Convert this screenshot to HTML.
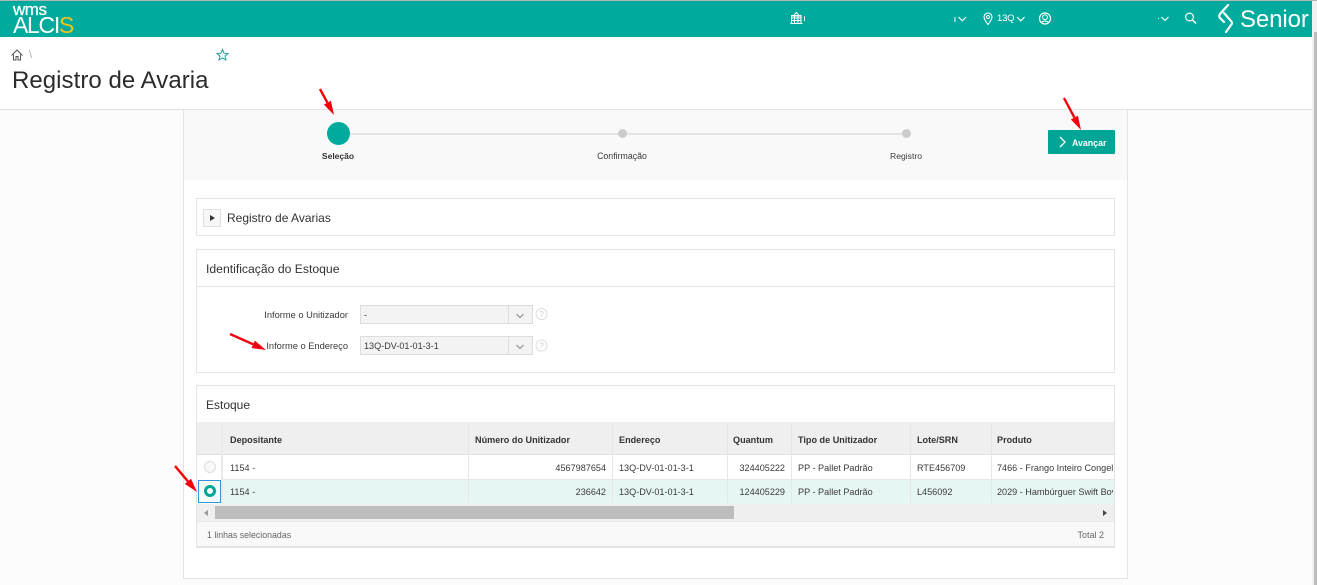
<!DOCTYPE html>
<html lang="pt"><head><meta charset="utf-8"><title>Registro de Avaria</title>
<style>
html,body{margin:0;padding:0;width:1317px;height:585px;overflow:hidden;background:#fff}
body{position:relative;font-family:"Liberation Sans",sans-serif;color:#333}
.a{position:absolute;white-space:nowrap}
.t{position:absolute;white-space:nowrap;font-size:9.1px;line-height:14px;color:#3a3a3a}
.h{font-weight:bold;color:#333;font-size:9.1px}
.r{text-align:right}
.b{position:absolute;background:#e6e6e6}
</style></head><body>
<!-- top bar -->
<div class="a" style="left:0;top:0;width:1317px;height:1px;background:#b5b5b5"></div>
<div class="a" style="left:0;top:1px;width:1312px;height:36px;background:#00ab9d"></div>
<div class="a" style="left:1312px;top:1px;width:5px;height:31px;background:#f0f0f0"></div>
<div class="a" style="left:1312px;top:32px;width:2px;height:553px;background:#f1f1f1"></div>
<div class="a" style="left:1314px;top:32px;width:3px;height:553px;background:#bdbdbd"></div>
<div class="a" style="left:13px;top:3px;font-size:17px;line-height:14px;color:#fff;letter-spacing:-.5px;-webkit-text-stroke:.3px #fff">wms</div>
<div class="a" style="left:13px;top:14px;font-size:23px;line-height:22px;color:#fff;letter-spacing:-1.3px">ALCI<span style="color:#f0c419">S</span></div>
<svg class="a" style="left:0;top:0" width="1312" height="37" fill="none" stroke="#fff">
 <!-- building -->
 <path d="M790 23.500h12.500M791.500 23v-7h9.500v7M791 15.500h10.500M794 15l2.300-2.500 2.300 2.500M791.500 18h9.500M791.500 20.500h9.500M794.500 16v7M798 16v7" stroke-width="1"/>
 <path d="M804.500 16.500v4.500M955 17v5" stroke-width="1"/>
 <path d="M958.500 17l3.800 3.800 3.800-3.800M1017 17l3.800 3.800 3.800-3.800M1161.500 17l3.500 3.500 3.500-3.500" stroke-width="1.100"/>
 <!-- pin -->
 <path d="M988 24.500c-2.500-3.200-4-5.300-4-7.500a4 4 0 0 1 8 0c0 2.200-1.500 4.300-4 7.500z" stroke-width="1.100"/>
 <circle cx="988" cy="17" r="1.500" stroke-width="1"/>
 <!-- user -->
 <circle cx="1045" cy="18.500" r="5.500" stroke-width="1.200"/>
 <circle cx="1045" cy="17.300" r="2.400" stroke-width="1"/>
 <path d="M1041.500 22.500c1-1.800 6-1.800 7 0" stroke-width="1"/>
 <path d="M1158 18.500h1" stroke-width="1"/>
 <!-- search -->
 <circle cx="1189.500" cy="17" r="3.900" stroke-width="1.200"/>
 <path d="M1192.500 20l3.500 3.500" stroke-width="1.300"/>
 <!-- senior symbol -->
 <path d="M1228 5L1220 14Q1218.500 16 1220 18L1224 22" stroke-width="2.200" stroke-linecap="round"/>
 <path d="M1224 13L1231 21Q1233 23 1231 25L1226 32" stroke-width="2.200" stroke-linecap="round"/>
</svg>
<div class="a" style="left:997px;top:12px;font-size:9.500px;line-height:14px;color:#fff;letter-spacing:-.2px">13Q</div>
<div class="a" style="left:1240px;top:5px;font-size:24px;line-height:30px;color:#fff;letter-spacing:-.1px">Senior</div>
<!-- breadcrumb -->
<svg class="a" style="left:10px;top:48px" width="16" height="14" fill="none" stroke="#555" stroke-width="1"><path d="M1.500 7.500L7 2l5.500 5.500M3.500 6.500V12h2.500V8.500h2V12h2.500V6.500"/></svg>
<div class="a" style="left:29px;top:48px;font-size:11px;line-height:14px;color:#aaa">\</div>
<svg class="a" style="left:216px;top:48px" width="14" height="14" fill="none" stroke="#1a9e95" stroke-width="1"><path d="M6.500 1.500l1.500 3.700 4 .3-3 2.600 1 3.900-3.500-2.100L3 12l1-3.900-3-2.600 4-.3z"/></svg>
<div class="a" style="left:12px;top:66px;font-size:24px;line-height:30px;color:#2c2c2c;letter-spacing:.05px">Registro de Avaria</div>
<!-- page bg -->
<div class="a" style="left:0;top:109px;width:1312px;height:476px;background:#fcfcfc;border-top:1px solid #e0e0e0;box-sizing:border-box"></div>
<!-- main card -->
<div class="a" style="left:183px;top:109px;width:945px;height:470px;background:#fff;border:1px solid #e4e4e4;box-sizing:border-box"></div>
<div class="a" style="left:184px;top:110px;width:943px;height:70px;background:#f9f9f9"></div>
<!-- stepper -->
<div class="a" style="left:338px;top:133px;width:568px;height:2px;background:#e4e4e4"></div>
<div class="a" style="left:327px;top:122px;width:23px;height:23px;border-radius:50%;background:#00ab9d"></div>
<div class="a" style="left:617.500px;top:129px;width:9px;height:9px;border-radius:50%;background:#ccc"></div>
<div class="a" style="left:901.500px;top:129px;width:9px;height:9px;border-radius:50%;background:#ccc"></div>
<div class="t" style="left:288px;width:100px;text-align:center;top:149px;font-weight:bold;color:#333;font-size:8.500px">Seleção</div>
<div class="t" style="left:572px;width:100px;text-align:center;top:149px;font-size:8.800px">Confirmação</div>
<div class="t" style="left:856px;width:100px;text-align:center;top:149px;font-size:8.600px">Registro</div>
<!-- button -->
<div class="a" style="left:1048px;top:130px;width:67px;height:24px;background:#00a596;border-radius:1px"></div>
<svg class="a" style="left:1048px;top:130px" width="24" height="24" fill="none" stroke="#fff" stroke-width="1.300"><path d="M12 7l5 5-5 5"/></svg>
<div class="a" style="left:1072px;top:136px;font-size:8.800px;line-height:14px;font-weight:bold;color:#fff">Avançar</div>
<!-- panel 1 -->
<div class="a" style="left:196px;top:198px;width:919px;height:38px;border:1px solid #e4e4e4;background:#fff;box-sizing:border-box"></div>
<div class="a" style="left:203px;top:209px;width:18px;height:18px;background:#f7f7f7;border:1px solid #e0e0e0;box-sizing:border-box"></div>
<div class="a" style="left:210px;top:215px;width:0;height:0;border-left:5px solid #333;border-top:3px solid transparent;border-bottom:3px solid transparent"></div>
<div class="a" style="left:227px;top:210px;font-size:12px;line-height:16px;color:#333">Registro de Avarias</div>
<!-- panel 2 -->
<div class="a" style="left:196px;top:249px;width:919px;height:124px;border:1px solid #e4e4e4;background:#fff;box-sizing:border-box"></div>
<div class="b" style="left:197px;top:286px;width:917px;height:1px"></div>
<div class="a" style="left:206px;top:261px;font-size:12.200px;line-height:16px;color:#333">Identificação do Estoque</div>
<div class="t r" style="left:200px;width:148px;top:308px;font-size:9.300px">Informe o Unitizador</div>
<div class="t r" style="left:200px;width:148px;top:339px;font-size:9.300px">Informe o Endereço</div>
<div class="a" style="left:360px;top:305px;width:173px;height:19px;background:#f3f3f3;border:1px solid #dcdcdc;box-sizing:border-box"></div>
<div class="a" style="left:360px;top:336px;width:173px;height:19px;background:#f3f3f3;border:1px solid #dcdcdc;box-sizing:border-box"></div>
<div class="b" style="left:508px;top:305px;width:1px;height:19px;background:#dcdcdc"></div>
<div class="b" style="left:508px;top:336px;width:1px;height:19px;background:#dcdcdc"></div>
<div class="t" style="left:364px;top:308px">-</div>
<div class="t" style="left:364px;top:339px">13Q-DV-01-01-3-1</div>
<svg class="a" style="left:505px;top:300px" width="50" height="60" fill="none">
 <path d="M11.500 14l3.500 3.500 3.500-3.500M11.500 45l3.500 3.500 3.500-3.500" stroke="#888"/>
 <circle cx="36.500" cy="14" r="5.500" stroke="#ddd"/><circle cx="36.500" cy="45.500" r="5.500" stroke="#ddd"/>
 <text x="36.500" y="17" font-size="8" fill="#ccc" text-anchor="middle" font-family="Liberation Sans">?</text>
 <text x="36.500" y="48.500" font-size="8" fill="#ccc" text-anchor="middle" font-family="Liberation Sans">?</text>
</svg>
<!-- panel 3 -->
<div class="a" style="left:196px;top:385px;width:919px;height:163px;border:1px solid #e4e4e4;border-bottom:2px solid #e4e4e4;background:#fff;box-sizing:border-box"></div>
<div class="a" style="left:206px;top:397px;font-size:12px;line-height:16px;color:#333">Estoque</div>
<div class="a" style="left:197px;top:422px;width:917px;height:32px;background:#efefef"></div>
<div class="b" style="left:197px;top:454px;width:917px;height:1px;background:#e0e0e0"></div>
<div class="a" style="left:197px;top:480px;width:917px;height:24px;background:#e6f6f4"></div>
<div class="b" style="left:197px;top:479px;width:917px;height:1px"></div>
<div class="a" style="left:197px;top:455px;width:25px;height:49px;background:#fff"></div>
<div class="a" style="left:197px;top:504px;width:917px;height:17px;background:#efefef"></div>
<div class="a" style="left:197px;top:521px;width:917px;height:25px;background:#f9f9f9;border-top:1px solid #e8e8e8;box-sizing:border-box"></div>
<div class="b" style="left:221px;top:423px;width:2px;height:80px;background:#eaeaea"></div>
<div class="b" style="left:468px;top:423px;width:1px;height:80px"></div>
<div class="b" style="left:612px;top:423px;width:1px;height:80px"></div>
<div class="b" style="left:727px;top:423px;width:1px;height:80px"></div>
<div class="b" style="left:791px;top:423px;width:1px;height:80px"></div>
<div class="b" style="left:910px;top:423px;width:1px;height:80px"></div>
<div class="b" style="left:991px;top:423px;width:1px;height:80px"></div>
<!-- headers -->
<div class="t h" style="left:230px;top:433px">Depositante</div>
<div class="t h" style="left:475px;top:433px">Número do Unitizador</div>
<div class="t h" style="left:619px;top:433px">Endereço</div>
<div class="t h" style="left:733px;top:433px">Quantum</div>
<div class="t h" style="left:798px;top:433px">Tipo de Unitizador</div>
<div class="t h" style="left:917px;top:433px">Lote/SRN</div>
<div class="t h" style="left:997px;top:433px">Produto</div>
<!-- rows -->
<div class="t" style="left:230px;top:461px">1154 -</div>
<div class="t r" style="left:480px;width:126px;top:461px">4567987654</div>
<div class="t" style="left:619px;top:461px">13Q-DV-01-01-3-1</div>
<div class="t r" style="left:730px;width:55px;top:461px">324405222</div>
<div class="t" style="left:798px;top:461px">PP - Pallet Padrão</div>
<div class="t" style="left:917px;top:461px">RTE456709</div>
<div class="t" style="left:997px;top:461px;width:116px;overflow:hidden">7466 - Frango Inteiro Congelado</div>
<div class="t" style="left:230px;top:485px">1154 -</div>
<div class="t r" style="left:480px;width:126px;top:485px">236642</div>
<div class="t" style="left:619px;top:485px">13Q-DV-01-01-3-1</div>
<div class="t r" style="left:730px;width:55px;top:485px">124405229</div>
<div class="t" style="left:798px;top:485px">PP - Pallet Padrão</div>
<div class="t" style="left:917px;top:485px">L456092</div>
<div class="t" style="left:997px;top:485px;width:116px;overflow:hidden">2029 - Hambúrguer Swift Bovino</div>
<!-- radios -->
<div class="a" style="left:204px;top:461px;width:10px;height:10px;border-radius:50%;border:1px solid #ddd;background:#f8f8f8"></div>
<div class="a" style="left:198px;top:480px;width:23px;height:23px;border:1px solid #3a94d4;box-sizing:border-box;background:#f4fbfa"></div>
<div class="a" style="left:204px;top:485px;width:6px;height:6px;border-radius:50%;border:3px solid #00a596;background:#fff"></div>
<!-- horizontal scrollbar -->
<div class="a" style="left:215px;top:506px;width:519px;height:13px;background:#bdbdbd"></div>
<div class="a" style="left:204px;top:509.500px;width:0;height:0;border-right:4px solid #999;border-top:3.500px solid transparent;border-bottom:3.500px solid transparent"></div>
<div class="a" style="left:1103px;top:509.500px;width:0;height:0;border-left:4px solid #444;border-top:3.500px solid transparent;border-bottom:3.500px solid transparent"></div>
<!-- footer -->
<div class="t" style="left:207px;top:528px;color:#666;font-size:8.800px">1 linhas selecionadas</div>
<div class="t r" style="left:1000px;width:104px;top:528px;color:#666;font-size:9px">Total 2</div>
<!-- red arrows -->
<svg class="a" style="left:0;top:0" width="1317" height="585" fill="#f5000a" stroke="#f5000a">
 <path d="M320 89L327.400 102.700" stroke-width="2.400" fill="none"/>
 <polygon stroke="none" points="334,115 330.900,100.800 323.900,104.600"/>
 <path d="M1064 98L1074.400 117.600" stroke-width="2.400" fill="none"/>
 <polygon stroke="none" points="1081,130 1077.900,115.700 1070.900,119.500"/>
 <path d="M230 334L253.200 344.300" stroke-width="2.400" fill="none"/>
 <polygon stroke="none" points="266,350 254.800,340.600 251.600,348"/>
 <path d="M175 466L187.900 481.300" stroke-width="2.400" fill="none"/>
 <polygon stroke="none" points="197,492 191,478.700 184.800,483.900"/>
</svg>
</body></html>
